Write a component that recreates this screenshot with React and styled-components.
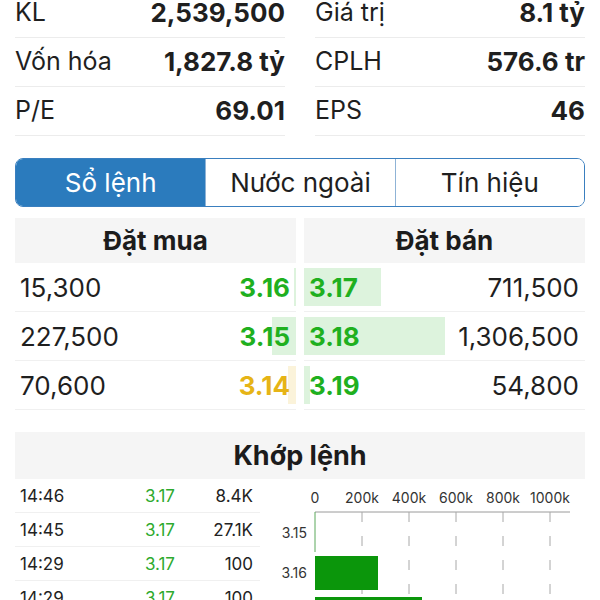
import React from 'react';
import styled, { createGlobalStyle } from 'styled-components';

const GlobalStyle = createGlobalStyle`
    * { box-sizing: border-box; }
    body {
        margin: 0;
        background: #ffffff;
        font-family: Inter, "Liberation Sans", sans-serif;
        color: #1c1c1c;
    }
`;

const stats = [
    ['KL', '2,539,500', 'Giá trị', '8.1 tỷ'],
    ['Vốn hóa', '1,827.8 tỷ', 'CPLH', '576.6 tr'],
    ['P/E', '69.01', 'EPS', '46'],
];

const bids = [
    { qty: '15,300', vol: 15300, price: '3.16', tone: 'up' },
    { qty: '227,500', vol: 227500, price: '3.15', tone: 'up' },
    { qty: '70,600', vol: 70600, price: '3.14', tone: 'ref' },
];

const asks = [
    { qty: '711,500', vol: 711500, price: '3.17' },
    { qty: '1,306,500', vol: 1306500, price: '3.18' },
    { qty: '54,800', vol: 54800, price: '3.19' },
];

const maxVol = 1306500;

const trades = [
    ['14:46', '3.17', '8.4K'],
    ['14:45', '3.17', '27.1K'],
    ['14:29', '3.17', '100'],
    ['14:29', '3.17', '100'],
];

const tabs = ['Sổ lệnh', 'Nước ngoài', 'Tín hiệu'];

const VolumeChart = () => {
    const ticks = ['0', '200k', '400k', '600k', '800k', '1000k'];
    const x0 = 45;
    const step = 47;
    return (
        <ChartSvg width="320" height="121" viewBox="0 0 320 121">
            {ticks.map((t, i) => (
                <text key={t} x={x0 + step * i} y="24" textAnchor="middle" fontSize="14" fill="#333">{t}</text>
            ))}
            <line x1={x0} y1="33" x2="300" y2="33" stroke="#9a9a9a" strokeWidth="1" />
            {ticks.slice(1).map((t, i) => (
                <line key={t} x1={x0 + step * (i + 1)} y1="33" x2={x0 + step * (i + 1)} y2="121"
                      stroke="#a8a8a8" strokeWidth="1" strokeDasharray="10 14" />
            ))}
            <line x1={x0} y1="33" x2={x0} y2="73" stroke="#5aa85a" strokeWidth="1" />
            <text x="37" y="59" textAnchor="end" fontSize="14" fill="#333">3.15</text>
            <text x="37" y="99" textAnchor="end" fontSize="14" fill="#333">3.16</text>
            <rect x={x0} y="77" width="63" height="34" fill="#0b960b" />
            <rect x={x0} y="118" width="107" height="34" fill="#0b960b" />
        </ChartSvg>
    );
};

const App = () => {
    return (
        <Screen>
            <GlobalStyle />
            <Content>
                <Stats>
                    {stats.map(([l1, v1, l2, v2]) => (
                        <React.Fragment key={l1}>
                            <StatRow><span>{l1}</span><StatValue>{v1}</StatValue></StatRow>
                            <StatRow><span>{l2}</span><StatValue>{v2}</StatValue></StatRow>
                        </React.Fragment>
                    ))}
                </Stats>

                <Segment>
                    {tabs.map((t, i) => (
                        <Tab key={t} active={i === 0}>{t}</Tab>
                    ))}
                </Segment>

                <Book>
                    <Side>
                        <SideHeader>Đặt mua</SideHeader>
                        {bids.map((b) => (
                            <BookRow key={b.price}>
                                <VolBar side="bid" tone={b.tone} style={{ width: `${(b.vol / maxVol) * 50}%` }} />
                                <Qty>{b.qty}</Qty>
                                <Price tone={b.tone}>{b.price}</Price>
                            </BookRow>
                        ))}
                    </Side>
                    <Side>
                        <SideHeader>Đặt bán</SideHeader>
                        {asks.map((a) => (
                            <BookRow key={a.price}>
                                <VolBar side="ask" tone="up" style={{ width: `${(a.vol / maxVol) * 50}%` }} />
                                <Price tone="up">{a.price}</Price>
                                <Qty>{a.qty}</Qty>
                            </BookRow>
                        ))}
                    </Side>
                </Book>

                <SectionHeader>Khớp lệnh</SectionHeader>
                <Matched>
                    <TradeList>
                        {trades.map(([time, price, vol], i) => (
                            <TradeRow key={i}>
                                <span>{time}</span>
                                <TradePrice>{price}</TradePrice>
                                <TradeVol>{vol}</TradeVol>
                            </TradeRow>
                        ))}
                    </TradeList>
                    <VolumeChart />
                </Matched>
            </Content>
        </Screen>
    );
};

const Screen = styled.div`
    width: 600px;
    height: 600px;
    overflow: hidden;
`;

const Content = styled.div`
    margin-top: -11px;
    padding: 0 15px;
`;

const Stats = styled.div`
    display: grid;
    grid-template-columns: 1fr 1fr;
    column-gap: 30px;
`;

const StatRow = styled.div`
    display: flex;
    justify-content: space-between;
    align-items: center;
    height: 49px;
    border-bottom: 1px solid #ececec;
    font-size: 25px;
    line-height: 1.1;
    color: #1f1f1f;
`;

const StatValue = styled.span`
    font-size: 26px;
    font-weight: 700;
`;

const Segment = styled.div`
    display: grid;
    grid-template-columns: repeat(3, 1fr);
    height: 49px;
    margin-top: 22px;
    border: 1.5px solid #3a7fbf;
    border-radius: 8px;
    overflow: hidden;
`;

const Tab = styled.div`
    display: flex;
    align-items: center;
    justify-content: center;
    font-size: 26px;
    background: ${({ active }) => (active ? '#2b7bbd' : '#ffffff')};
    color: ${({ active }) => (active ? '#ffffff' : '#1f1f1f')};
    & + & {
        border-left: 1px solid #8fb3d6;
    }
`;

const Book = styled.div`
    display: grid;
    grid-template-columns: 1fr 1fr;
    column-gap: 8px;
    margin-top: 11px;
`;

const Side = styled.div`
    display: flex;
    flex-direction: column;
`;

const SideHeader = styled.div`
    height: 45px;
    display: flex;
    align-items: center;
    justify-content: center;
    background: #f5f5f5;
    font-size: 26px;
    font-weight: 700;
    color: #1c1c1c;
`;

const BookRow = styled.div`
    position: relative;
    display: flex;
    justify-content: space-between;
    align-items: center;
    height: 49px;
    padding: 0 6px 0 5px;
    border-bottom: 1px solid #f0f0f0;
    font-size: 26px;
`;

const VolBar = styled.div`
    position: absolute;
    top: 5px;
    bottom: 5px;
    ${({ side }) => (side === 'bid' ? 'right: 0;' : 'left: 0;')}
    background: ${({ tone }) => (tone === 'ref' ? '#fbf3da' : '#ddf3dd')};
`;

const Qty = styled.span`
    position: relative;
    color: #1f1f1f;
`;

const Price = styled.span`
    position: relative;
    font-weight: 700;
    color: ${({ tone }) => (tone === 'ref' ? '#e6b416' : '#1fb01f')};
`;

const SectionHeader = styled.div`
    height: 47px;
    margin-top: 22px;
    display: flex;
    align-items: center;
    justify-content: center;
    background: #f5f5f5;
    font-size: 27px;
    font-weight: 700;
    color: #1c1c1c;
`;

const Matched = styled.div`
    display: grid;
    grid-template-columns: 245px 1fr;
    column-gap: 10px;
`;

const TradeList = styled.div`
    display: flex;
    flex-direction: column;
`;

const TradeRow = styled.div`
    display: grid;
    grid-template-columns: 1fr 70px 78px;
    align-items: center;
    height: 34px;
    padding: 0 7px 0 5px;
    border-bottom: 1px solid #f0f0f0;
    font-size: 17px;
    color: #222;
`;

const TradePrice = styled.span`
    text-align: right;
    color: #2eaa2e;
`;

const TradeVol = styled.span`
    text-align: right;
`;

const ChartSvg = styled.svg`
    display: block;
    overflow: visible;
    font-family: Inter, "Liberation Sans", sans-serif;
`;

export default App;
